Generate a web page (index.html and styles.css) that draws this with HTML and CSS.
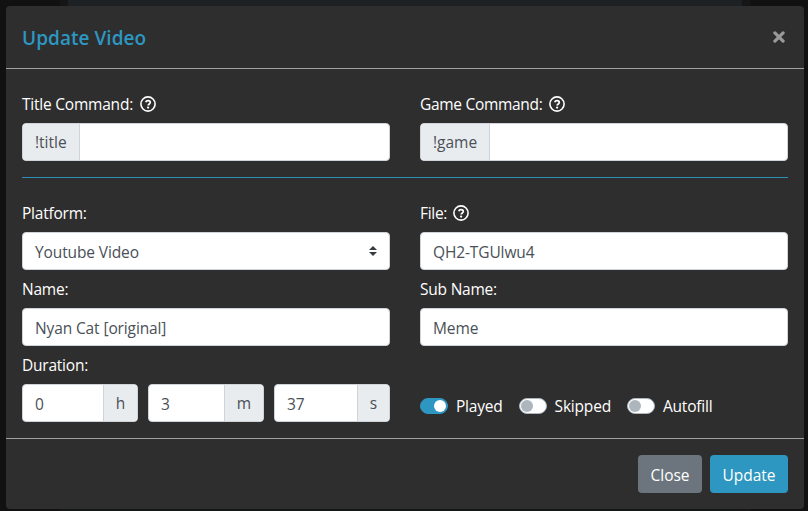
FILE: index.html
```html
<!DOCTYPE html>
<html lang="en">
<head>
<meta charset="utf-8">
<title>Update Video</title>
<link rel="stylesheet" href="styles.css">
</head>
<body>
<svg width="0" height="0" class="defs">
  <symbol id="help" viewBox="0 0 16 16">
    <circle cx="8" cy="8" r="7.1" fill="none" stroke="currentColor" stroke-width="1.6"/>
    <path d="M5.7 6.3C6.1 5.1 6.9 4.7 8 4.7c1.3 0 2.3.8 2.3 1.9C10.300 7.900 8.200 8 8.200 9.500" fill="none" stroke="currentColor" stroke-width="1.7"/>
    <circle cx="8.100" cy="11.600" r="1.150" fill="currentColor"/>
  </symbol>
</svg>
<div class="page">
<div class="modal">
  <header class="modal-header">
    <h1>Update Video</h1>
    <svg class="close" viewBox="0 0 12 12"><path d="M1.900 1.900L10.100 10.100M10.100 1.900L1.900 10.100" stroke="currentColor" stroke-width="3.200" stroke-linecap="round"/></svg>
  </header>
  <main class="modal-body">
    <div class="row">
      <div class="group">
        <label><span>Title Command:</span><svg class="help"><use href="#help"/></svg></label>
        <div class="control"><span class="addon pre a-title">!title</span></div>
      </div>
      <div class="group">
        <label class="tight"><span>Game Command:</span><svg class="help"><use href="#help"/></svg></label>
        <div class="control"><span class="addon pre a-game">!game</span></div>
      </div>
    </div>
    <hr>
    <div class="row">
      <div class="group">
        <label><span>Platform:</span></label>
        <div class="control select"><span class="value">Youtube Video</span><svg class="arrows" viewBox="0 0 8 10"><path d="M4 0L8 4H0zM4 10L0 6H8z" fill="#343a40"/></svg></div>
      </div>
      <div class="group">
        <label class="tight"><span>File:</span><svg class="help"><use href="#help"/></svg></label>
        <div class="control"><span class="value">QH2-TGUlwu4</span></div>
      </div>
      <div class="group">
        <label><span>Name:</span></label>
        <div class="control"><span class="value">Nyan Cat [original]</span></div>
      </div>
      <div class="group">
        <label><span>Sub Name:</span></label>
        <div class="control"><span class="value">Meme</span></div>
      </div>
      <div class="group">
        <label><span>Duration:</span></label>
        <div class="durations">
          <div class="control"><span class="value">0</span><span class="addon post a-h">h</span></div>
          <div class="control"><span class="value">3</span><span class="addon post a-m">m</span></div>
          <div class="control"><span class="value">37</span><span class="addon post a-s">s</span></div>
        </div>
      </div>
      <div class="switches">
        <div class="switch on"><i></i><span>Played</span></div>
        <div class="switch"><i></i><span>Skipped</span></div>
        <div class="switch"><i></i><span>Autofill</span></div>
      </div>
    </div>
  </main>
  <footer class="modal-footer">
    <button class="b-close">Close</button>
    <button class="b-update">Update</button>
  </footer>
</div>
</div>
</body>
</html>
```
FILE: styles.css
```css
* { box-sizing: border-box; }
body {
  margin: 0;
  font: 400 15.5px/24px "Open Sans", "Noto Sans", sans-serif;
  color: #fff;
  overflow: hidden;
}
.defs { display: none; }
.page {
  height: 511px;
  padding: 6px 4px 2px 6px;
  background:
    linear-gradient(#151616, #151616) 60px 100% / 690px 2px no-repeat,
    linear-gradient(90deg, #111 60px, #161616 60px 68px, #1d2124 68px 742px, #161616 742px 750px, #111 750px);
}
.modal {
  height: 503px;
  background: #2e2e2e;
  border-radius: 4px;
}
.modal-header {
  height: 63px;
  padding: 0 18.6px 0 16px;
  border-bottom: 1px solid #a0a0a0;
  display: flex;
  justify-content: space-between;
  align-items: center;
}
h1 { margin: 2px 0 0; font-size: 19px; line-height: 30px; font-weight: 600; letter-spacing: 0.04px; color: #2d97c1; }
.close { width: 12px; height: 12px; color: #999; }
.modal-body { height: 369px; padding: 16px 16px 0; }
.row { display: grid; grid-template-columns: 368px 368px; column-gap: 30px; }
span { white-space: nowrap; }
label { display: flex; align-items: center; height: 38px; font-weight: 500; letter-spacing: -0.22px; }
label span { margin-top: -1px; }
.help { width: 16px; height: 16px; margin-left: 7px; color: #fff; }
.tight { letter-spacing: -0.3px; }
.tight .help { margin-left: 6px; }
.control {
  display: flex;
  align-items: center;
  height: 38px;
  background: #fff;
  border: 1px solid #ced4da;
  border-radius: 4px;
  overflow: hidden;
  color: #495057;
}
.value { padding-left: 12px; flex: 1; padding-top: 2px; letter-spacing: -0.12px; }
.select .value { padding-top: 1px; }
.arrows { width: 8px; height: 10px; margin-right: 12px; }
.addon {
  height: 36px;
  display: flex;
  align-items: center;
  justify-content: center;
  background: #e9ecef;
  color: #495057;
}
.pre { border-right: 1px solid #ced4da; justify-content: flex-start; padding-left: 12px; }
.post { border-left: 1px solid #ced4da; }
.a-title { width: 57px; }
.a-game { width: 69px; }
.a-h { width: 34px; }
.a-m { width: 39px; }
.a-s { width: 32px; }
hr { height: 1px; margin: 16px 0; border: 0; background: #2d8fb5; }
.durations { display: grid; grid-template-columns: repeat(3, 116px); gap: 10px; }
.switches { display: flex; align-self: end; height: 32px; letter-spacing: -0.2px; font-weight: 500; }
.switch { display: flex; align-items: center; height: 32px; }
.switch + .switch { margin-left: 16px; }
.switch i {
  width: 28px;
  height: 16px;
  margin-right: 8px;
  padding: 1px;
  border: 1px solid #adb5bd;
  border-radius: 8px;
  background: #fff;
}
.switch i::before { content: ""; display: block; width: 12px; height: 12px; border-radius: 50%; background: #adb5bd; }
.switch.on i { background: #2d97c1; border-color: #2d97c1; }
.switch.on i::before { margin-left: 12px; background: #fff; }
.modal-footer {
  height: 71px;
  padding: 16px;
  border-top: 1px solid #a0a0a0;
  display: flex;
  justify-content: flex-end;
  gap: 8px;
}
button {
  height: 38px;
  padding: 1px 0 0;
  border: 0;
  border-radius: 4px;
  font: inherit;
  color: #fff;
}
.b-close { width: 64px; background: #6c757d; }
.b-update { width: 78px; background: #2d97c1; }
```
